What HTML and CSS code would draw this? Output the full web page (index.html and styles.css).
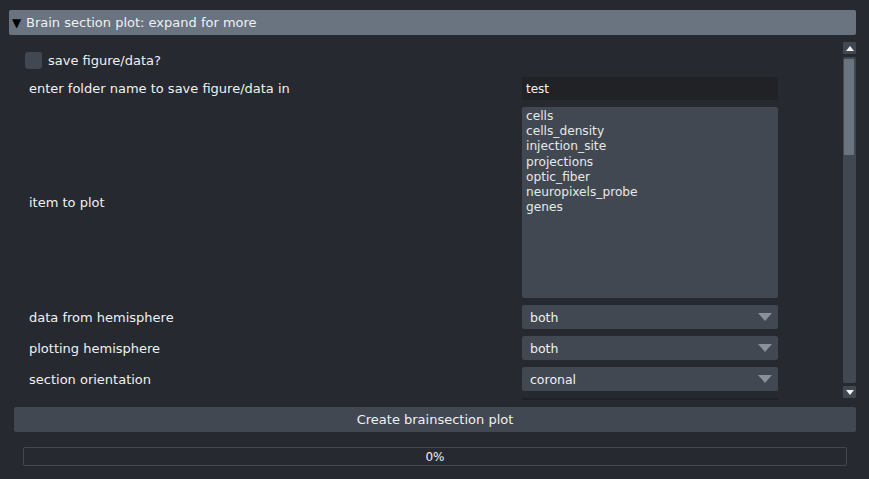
FILE: index.html
```html
<!DOCTYPE html>
<html>
<head>
<meta charset="utf-8">
<link rel="stylesheet" href="styles.css">
</head>
<body>
<div class="header"><span class="caret">▼</span>Brain section plot: expand for more</div>
<div class="scrollarea">
  <div class="content">
    <div class="checkrow"><span class="checkbox"></span><span>save figure/data?</span></div>
    <div class="form">
      <div class="label">enter folder name to save figure/data in</div>
      <div class="input">test</div>
      <div class="label">item to plot</div>
      <div class="list">
        <div>cells</div>
        <div>cells_density</div>
        <div>injection_site</div>
        <div>projections</div>
        <div>optic_fiber</div>
        <div>neuropixels_probe</div>
        <div>genes</div>
      </div>
      <div class="label">data from hemisphere</div>
      <div class="combo">both<span class="arrow"></span></div>
      <div class="label">plotting hemisphere</div>
      <div class="combo">both<span class="arrow"></span></div>
      <div class="label">section orientation</div>
      <div class="combo">coronal<span class="arrow"></span></div>
      <div class="label"></div>
      <div class="cut"></div>
    </div>
  </div>
  <div class="scrollbar">
    <div class="sbtn"><span class="up"></span></div>
    <div class="track"><div class="handle"></div></div>
    <div class="sbtn"><span class="down"></span></div>
  </div>
</div>
<div class="button">Create brainsection plot</div>
<div class="progress">0%</div>
</body>
</html>
```

FILE: styles.css
```css
html, body {
  margin: 0;
  padding: 0;
  background: #262930;
  color: #f0f1f2;
  font-family: "DejaVu Sans", sans-serif;
  font-size: 13px;
  width: 869px;
  height: 479px;
  overflow: hidden;
}

.header {
  margin: 10px 13px 0 9px;
  height: 25px;
  background: #6a7380;
  border-radius: 2px;
  display: flex;
  align-items: center;
  padding-left: 3px;
  box-sizing: border-box;
}
.caret {
  font-size: 12px;
  width: 14px;
  color: #000;
  margin-top: 1px;
}

.scrollarea {
  display: flex;
  margin: 5px 13px 0 14px;
  height: 360px;
  overflow: hidden;
}
.content {
  flex: 1;
  padding-left: 11px;
}
.checkrow {
  display: flex;
  align-items: center;
  margin-top: 12px;
  height: 17px;
  gap: 6px;
}
.checkbox {
  width: 17px;
  height: 17px;
  background: #414851;
  border-radius: 3px;
}
.form {
  display: grid;
  grid-template-columns: 493px 256px;
  row-gap: 7px;
  margin-top: 8px;
  padding-left: 4px;
}
.label {
  display: flex;
  align-items: center;
}
.input {
  height: 23px;
  background: #202226;
  border-radius: 2px;
  display: flex;
  align-items: center;
  padding-left: 4px;
  font-size: 12px;
}
.list {
  height: 191px;
  background: #414851;
  border-radius: 2px;
  padding: 2px 4px;
  box-sizing: border-box;
  line-height: 15.2px;
  font-size: 12.2px;
  color: #e6e8ea;
}
.combo {
  height: 24px;
  background: #414851;
  border-radius: 2px;
  display: flex;
  align-items: center;
  justify-content: space-between;
  padding: 0 6px 0 8px;
  font-size: 12.5px;
}
.arrow {
  width: 0;
  height: 0;
  border-left: 7px solid transparent;
  border-right: 7px solid transparent;
  border-top: 8px solid #8b9097;
}
.cut {
  height: 3px;
  background: #1f2125;
}

.scrollbar {
  width: 13px;
  margin-left: 1px;
  display: flex;
  flex-direction: column;
  padding-top: 2px;
  gap: 3px;
}
.sbtn {
  height: 12px;
  background: #414851;
  border-radius: 1px;
  display: flex;
  align-items: center;
  justify-content: center;
}
.up {
  width: 0; height: 0;
  border-left: 4px solid transparent;
  border-right: 4px solid transparent;
  border-bottom: 5px solid #f0f1f2;
}
.down {
  width: 0; height: 0;
  border-left: 4px solid transparent;
  border-right: 4px solid transparent;
  border-top: 5px solid #f0f1f2;
}
.track {
  height: 326px;
  background: #414851;
  border-radius: 2px;
  padding: 2px 2px 0 1px;
  box-sizing: border-box;
}
.handle {
  height: 96px;
  background: #6a7380;
  border-radius: 1px;
}

.button {
  margin: 7px 13px 0 14px;
  height: 25px;
  background: #414851;
  border-radius: 2px;
  display: flex;
  align-items: center;
  justify-content: center;
}
.progress {
  margin: 15px 22px 0 23px;
  height: 19px;
  border: 1px solid #414851;
  border-radius: 2px;
  box-sizing: border-box;
  display: flex;
  align-items: center;
  justify-content: center;
  font-size: 12px;
}
```
